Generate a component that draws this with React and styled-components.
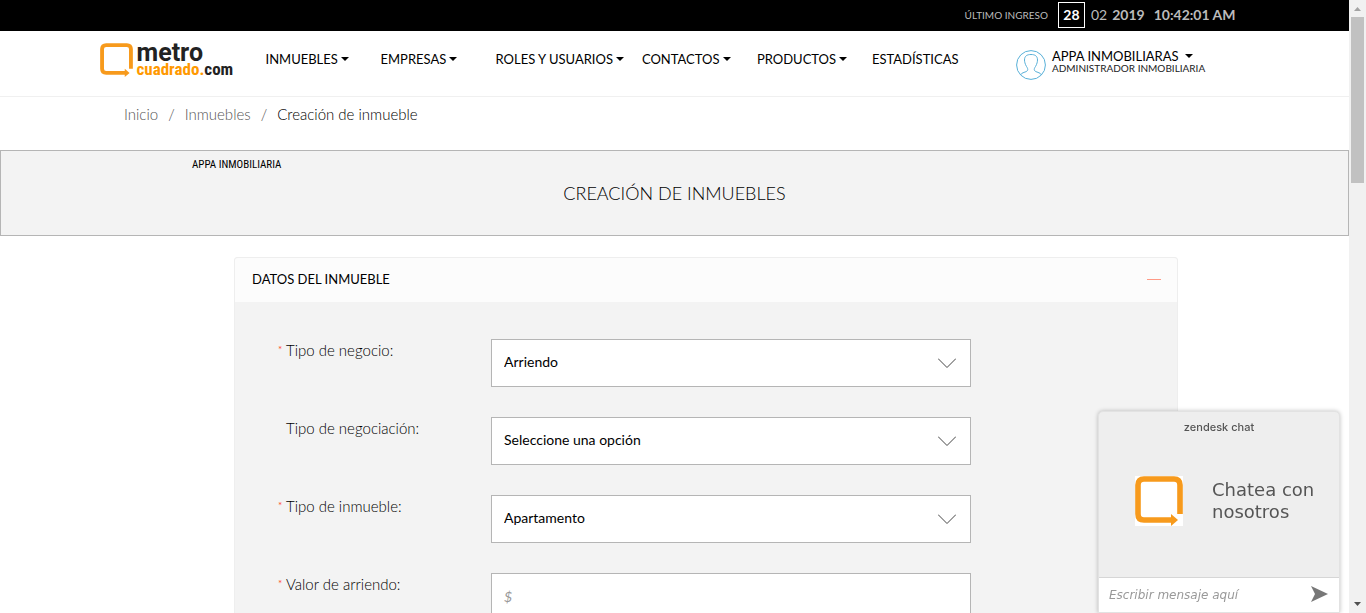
import React from "react";
import styled, { createGlobalStyle } from "styled-components";

const GlobalStyle = createGlobalStyle`
  *, *::before, *::after { box-sizing: border-box; }
  body {
    margin: 0;
    background: #fff;
    color: #111;
    font-family: Lato, "Open Sans", sans-serif;
    font-size: 15px;
    line-height: 20px;
  }
  button, input, select { font: inherit; color: inherit; }
  a { color: inherit; text-decoration: none; }
`;

const Shell = styled.div`
  display: flex;
  height: 100vh;
`;

const Page = styled.div`
  flex: 1;
  min-width: 0;
  overflow-y: auto;
  scrollbar-width: none;
`;

const Container = styled.div`
  max-width: 1170px;
  margin: 0 auto;
`;

const TopBar = styled.div`
  background: #000;
  color: #bbb;
`;

const AccessInfo = styled(Container)`
  display: flex;
  align-items: center;
  justify-content: flex-end;
  height: 31px;
  padding: 0 24px 2px 0;
  font-size: 14px;
`;

const AccessLabel = styled.span`
  margin-right: 10px;
  font-size: 10px;
`;

const Day = styled.span`
  width: 27px;
  height: 26px;
  margin-right: 6px;
  border: 1px solid #fff;
  color: #fff;
  font-weight: 700;
  line-height: 24px;
  text-align: center;
`;

const Month = styled.span`
  margin-right: 5px;
`;

const Strong = styled.strong`
  margin-left: ${(p) => (p.$spaced ? "9px" : "0")};
`;

const Header = styled.header`
  border-bottom: 1px solid #f0f0f0;
`;

const HeaderInner = styled(Container)`
  display: flex;
  align-items: flex-start;
  height: 65px;
  padding: 12px 0 0 10px;
`;

const Brand = styled.a`
  display: flex;
  flex: none;
  gap: 4px;
  width: 166px;
  font-family: Roboto, sans-serif;
  font-weight: 700;
`;

const BrandText = styled.span`
  display: flex;
  flex-direction: column;
`;

const BrandTop = styled.span`
  color: #222;
  font-size: 25px;
  line-height: 20px;
`;

const BrandBottom = styled.span`
  color: #222;
  font-family: "Roboto Condensed", Roboto, sans-serif;
  font-size: 17px;
  line-height: 12px;
`;

const Orange = styled.span`
  color: #f90;
`;

const Nav = styled.nav`
  display: flex;
  flex: none;
`;

const NavItem = styled.a`
  display: flex;
  align-items: center;
  gap: 3px;
  min-width: 115px;
  height: 32px;
  padding-right: 18px;
  color: #000;
  font-size: 13px;
  white-space: nowrap;
`;

const UserMenu = styled.button`
  display: flex;
  flex: none;
  gap: 6px;
  margin-left: 29px;
  padding: 7px 0 0;
  border: 0;
  background: none;
  text-align: left;
`;

const UserText = styled.span`
  display: flex;
  flex-direction: column;
  font-size: 10px;
  line-height: 12px;
  color: #222;
  white-space: nowrap;
`;

const UserName = styled.span`
  display: flex;
  align-items: center;
  gap: 6px;
  color: #000;
  font-size: 13px;
  line-height: 12px;
`;

const Breadcrumb = styled.nav`
  display: flex;
  gap: 10px;
  height: 53px;
  padding: 7px 124px 0;
  color: #555;
  font-weight: 300;
`;

const Current = styled.span`
  color: #000;
`;

const TitleBand = styled.section`
  height: 86px;
  padding-top: 7px;
  border: 1px solid #b5b5b5;
  background: #f3f3f3;
`;

const Company = styled.p`
  margin: 0 0 9px 191px;
  color: #000;
  font-family: "Roboto Condensed", Roboto, sans-serif;
  font-size: 11px;
  line-height: 14px;
`;

const Title = styled.h1`
  margin: 0;
  color: #000;
  font-size: 18px;
  font-weight: 300;
  line-height: 24px;
  text-align: center;
`;

const Panel = styled.section`
  width: 70%;
  margin: 21px 0 0 234px;
  border: 1px solid #eee;
  border-radius: 3px 3px 0 0;
  background: #f3f3f3;
`;

const PanelHeader = styled.div`
  display: flex;
  align-items: center;
  justify-content: space-between;
  height: 44px;
  padding: 0 16px 2px 17px;
  border-radius: 3px 3px 0 0;
  background: #fcfcfc;
`;

const PanelTitle = styled.h2`
  margin: 0;
  color: #000;
  font-size: 13px;
  font-weight: 400;
`;

const Collapse = styled.button`
  width: 14px;
  height: 20px;
  padding: 0;
  border: 0;
  background: none;
`;

const Dash = styled.span`
  display: block;
  height: 1px;
  background: #ff9a86;
`;

const Form = styled.form`
  display: flex;
  flex-direction: column;
  gap: 30px;
  padding: 37px 43px;
`;

const Row = styled.div`
  display: grid;
  grid-template-columns: 213px minmax(0, 480px);
`;

const Label = styled.label`
  display: flex;
  padding-top: 1px;
  color: #000;
  font-weight: 300;
`;

const Required = styled.span`
  width: 8px;
  color: #ff5030;
  font-size: 10px;
  font-weight: 400;
  line-height: 18px;
`;

const Field = styled.div`
  position: relative;
`;

const control = `
  display: block;
  width: 100%;
  height: 48px;
  padding: 0 12px 2px;
  border: 1px solid #b5b5b5;
  border-radius: 0;
  background: #fff;
  color: #000;
  font-size: 14px;
  outline: 0;
`;

const Select = styled.select`
  ${control}
  appearance: none;
`;

const Input = styled.input`
  ${control}
  &::placeholder { color: #999; font-style: italic; }
`;

const Chevron = styled.svg`
  position: absolute;
  top: 19px;
  right: 15px;
  pointer-events: none;
`;

const ScrollTrack = styled.div`
  display: flex;
  flex: none;
  flex-direction: column;
  align-items: center;
  width: 17px;
  background: #f1f1f1;
`;

const ScrollThumb = styled.div`
  flex: none;
  width: 13px;
  height: 27vh;
  margin-bottom: auto;
  background: #c1c1c1;
`;

const Chat = styled.aside`
  position: fixed;
  right: 26px;
  bottom: 0;
  width: 242px;
  border: 1px solid #e2e2e2;
  border-radius: 5px 5px 0 0;
  background: #eee;
  box-shadow: 0 0 4px rgba(0, 0, 0, 0.25);
  color: #555;
`;

const ChatTitle = styled.div`
  height: 30px;
  font-family: Inter, sans-serif;
  font-size: 11px;
  font-weight: 500;
  line-height: 30px;
  text-align: center;
`;

const ChatBody = styled.div`
  display: flex;
  align-items: center;
  gap: 29px;
  height: 135px;
  padding: 0 20px 18px 36px;
  font-family: "DejaVu Sans", sans-serif;
  font-size: 18px;
  line-height: 22px;
`;

const ChatLogo = styled.span`
  display: flex;
  flex: none;
  background: #fff;
`;

const ChatForm = styled.form`
  display: flex;
  align-items: center;
  height: 35px;
  padding: 0 11px 0 10px;
  border-top: 1px solid #d6d6d6;
  background: #fff;
`;

const ChatInput = styled.input`
  flex: 1;
  min-width: 0;
  padding: 0;
  border: 0;
  outline: 0;
  background: none;
  font-family: "DejaVu Sans", sans-serif;
  font-size: 12px;
  &::placeholder { color: #999; font-style: italic; opacity: 1; }
`;

const Send = styled.button`
  display: flex;
  padding: 0 0 2px;
  border: 0;
  background: none;
`;

function Caret() {
  return (
    <svg width="8" height="4" viewBox="0 0 8 4" aria-hidden="true">
      <path d="M0 0h8L4 4z" fill="#000" />
    </svg>
  );
}

function SquareMark({ width, height }) {
  return (
    <svg width={width} height={height} viewBox="0 0 48 50" preserveAspectRatio="none" aria-hidden="true">
      <path d="M45 38V9q0-6-6-6H9Q3 3 3 9v29q0 6 6 6h28" fill="none" stroke="#f79a1c" strokeWidth="5.6" />
      <path d="M36 38l7 6-7 6z" fill="#f79a1c" />
    </svg>
  );
}

function UserIcon() {
  return (
    <svg width="30" height="30" viewBox="0 0 30 30" fill="none" stroke="#58b0d8" aria-hidden="true">
      <circle cx="15" cy="15" r="14.4" />
      <path d="M4.500 25c1-3 6-2.500 7-4.500.6-1.300 0-2.500-1-4-1.500-2.500-2-5-2-6.500C8.500 6 11 4.500 15 4.500S21.500 6 21.500 10c0 1.500-.5 4-2 6.500-1 1.500-1.600 2.700-1 4 1 2 6 1.500 7 4.500" />
    </svg>
  );
}

function ScrollArrow({ up }) {
  return (
    <svg width="17" height="17" viewBox="0 0 17 17" aria-hidden="true">
      {up ? <path d="M5 11h7L8.500 7z" fill="#a3a3a3" /> : <path d="M5 6h7L8.500 10z" fill="#505050" />}
    </svg>
  );
}

const menu = [
  ["INMUEBLES", true],
  ["EMPRESAS", true],
  ["ROLES Y USUARIOS", true],
  ["CONTACTOS", true],
  ["PRODUCTOS", true],
  ["ESTADÍSTICAS", false],
];

const fields = [
  { id: "negocio", label: "Tipo de negocio:", required: true, options: ["Arriendo", "Venta"] },
  { id: "negociacion", label: "Tipo de negociación:", options: ["Seleccione una opción"] },
  { id: "inmueble", label: "Tipo de inmueble:", required: true, options: ["Apartamento", "Casa"] },
  { id: "valor", label: "Valor de arriendo:", required: true },
];

export default function App() {
  return (
    <Shell>
      <GlobalStyle />
      <Page>
        <TopBar>
          <AccessInfo>
            <AccessLabel>ÚLTIMO INGRESO</AccessLabel>
            <Day>28</Day>
            <Month>02</Month>
            <Strong>2019</Strong>
            <Strong $spaced>10:42:01 AM</Strong>
          </AccessInfo>
        </TopBar>
        <Header>
          <HeaderInner>
            <Brand href="#">
              <SquareMark width={33} height={34} />
              <BrandText>
                <BrandTop>metro</BrandTop>
                <BrandBottom><Orange>cuadrado.</Orange>com</BrandBottom>
              </BrandText>
            </Brand>
            <Nav>
              {menu.map(([name, hasMenu]) => (
                <NavItem href="#" key={name}>{name}{hasMenu && <Caret />}</NavItem>
              ))}
            </Nav>
            <UserMenu type="button">
              <UserIcon />
              <UserText>
                <UserName>APPA INMOBILIARAS <Caret /></UserName>
                ADMINISTRADOR INMOBILIARIA
              </UserText>
            </UserMenu>
          </HeaderInner>
        </Header>
        <Breadcrumb>
          <a href="#">Inicio</a>
          <span>/</span>
          <a href="#">Inmuebles</a>
          <span>/</span>
          <Current>Creación de inmueble</Current>
        </Breadcrumb>
        <TitleBand>
          <Company>APPA INMOBILIARIA</Company>
          <Title>CREACIÓN DE INMUEBLES</Title>
        </TitleBand>
        <Panel>
          <PanelHeader>
            <PanelTitle>DATOS DEL INMUEBLE</PanelTitle>
            <Collapse type="button" aria-label="Contraer"><Dash /></Collapse>
          </PanelHeader>
          <Form>
            {fields.map((f) => (
              <Row key={f.id}>
                <Label htmlFor={f.id}><Required>{f.required ? "*" : ""}</Required>{f.label}</Label>
                {f.options ? (
                  <Field>
                    <Select id={f.id}>{f.options.map((o) => <option key={o}>{o}</option>)}</Select>
                    <Chevron width="18" height="11" viewBox="0 0 18 11" fill="none" stroke="#444" aria-hidden="true">
                      <path d="M0 .5l9 9 9-9" />
                    </Chevron>
                  </Field>
                ) : (
                  <Input id={f.id} placeholder="$" />
                )}
              </Row>
            ))}
          </Form>
        </Panel>
      </Page>
      <ScrollTrack aria-hidden="true">
        <ScrollArrow up />
        <ScrollThumb />
        <ScrollArrow />
      </ScrollTrack>
      <Chat>
        <ChatTitle>zendesk chat</ChatTitle>
        <ChatBody>
          <ChatLogo><SquareMark width={48} height={50} /></ChatLogo>
          <span>Chatea con nosotros</span>
        </ChatBody>
        <ChatForm>
          <ChatInput aria-label="Mensaje" placeholder="Escribir mensaje aquí" />
          <Send type="button" aria-label="Enviar">
            <svg width="17" height="16" viewBox="0 0 17 16" aria-hidden="true">
              <path d="M0 0l17 8-17 8 4-8z" fill="#777" />
            </svg>
          </Send>
        </ChatForm>
      </Chat>
    </Shell>
  );
}
